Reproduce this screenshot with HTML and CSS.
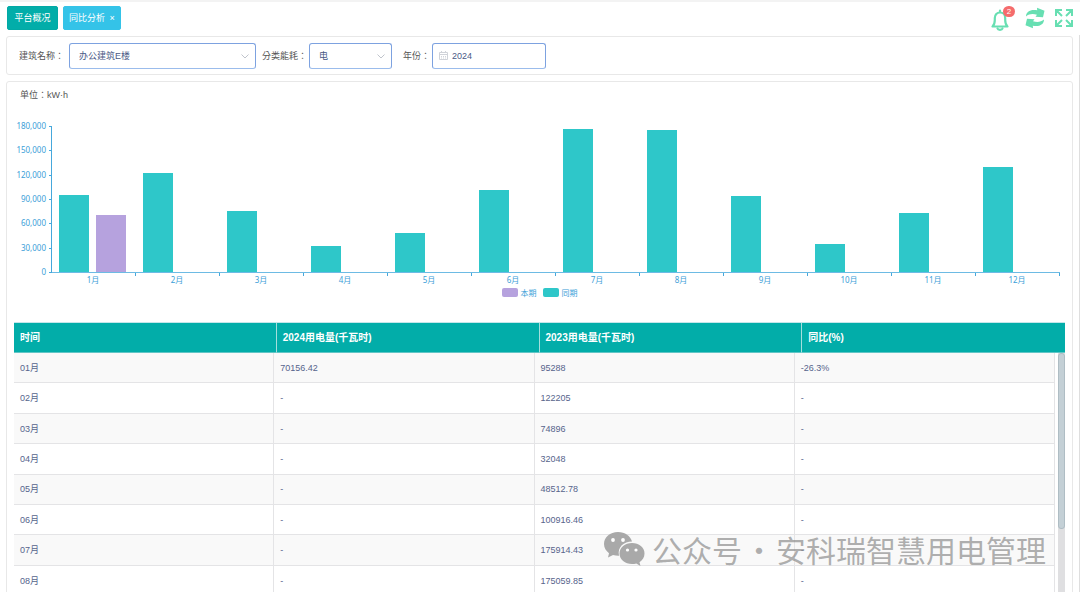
FILE: index.html
```
<!DOCTYPE html>
<html lang="zh-CN">
<head>
<meta charset="utf-8">
<title>同比分析</title>
<link rel="stylesheet" href="styles.css">
</head>
<body>
<header class="topbar">
  <nav class="tabs">
    <button class="tab" type="button">平台概况</button>
    <button class="tab tab-current" type="button">同比分析 <span class="tab-close">×</span></button>
  </nav>
  <div class="tools">
    <button class="tool" type="button" aria-label="消息">
      <svg width="18" height="22" viewBox="0 0 18 22" fill="none" stroke="currentColor" stroke-width="2.200" stroke-linejoin="round" stroke-linecap="round"><path d="M9 1.500v1.500M1.500 17.500h15c-1.700-1.500-2.300-3-2.300-6.500v-2C14.200 5.500 12 3.500 9 3.500S3.800 5.500 3.800 9v2c0 3.500-.6 5-2.300 6.500z"/><path d="M6.500 19.500c.5 1.700 4.500 1.700 5 0"/></svg>
      <span class="badge">2</span>
    </button>
    <button class="tool" type="button" aria-label="刷新">
      <svg width="20" height="22" viewBox="0 0 20 22" fill="currentColor"><path d="M1 9.500C1 4.500 5.500 2 12.200 3.200L12 .8 19.500 3.700 18 10.200 10.500 9.800 12 7.800C8 6.500 4 6.800 1 9.500z"/><path d="M19 12.500c0 5-4.500 7.500-11.200 6.300L8 21.200.5 18.300 2 11.800l7.500.4L8 14.200c4 1.300 8 1 11-1.700z"/></svg>
    </button>
    <button class="tool" type="button" aria-label="全屏">
      <svg width="18" height="18" viewBox="0 0 18 18" fill="none" stroke="currentColor" stroke-width="2"><path d="M1 7V1h6M11 1h6v6M17 11v6h-6M7 17H1v-6M1 1l6 6M17 1l-6 6M17 17l-6-6M1 17l6-6"/></svg>
    </button>
  </div>
</header>

<main class="page">
  <form class="card filters">
    <div class="field">
      <label class="label" for="building">建筑名称：</label>
      <span class="control control-wide">
        <select id="building" class="input"><option>办公建筑E楼</option></select>
        <svg class="chevron" width="8" height="5" viewBox="0 0 8 5" fill="none" stroke="currentColor"><path d="M.5.5 4 4 7.500.5"/></svg>
      </span>
    </div>
    <div class="field">
      <label class="label" for="energy">分类能耗：</label>
      <span class="control control-small">
        <select id="energy" class="input"><option>电</option></select>
        <svg class="chevron" width="8" height="5" viewBox="0 0 8 5" fill="none" stroke="currentColor"><path d="M.5.5 4 4 7.500.5"/></svg>
      </span>
    </div>
    <div class="field field-year">
      <label class="label" for="year">年份：</label>
      <span class="control control-date">
        <input id="year" class="input input-date" type="text" value="2024">
        <svg class="calendar" width="9" height="9" viewBox="0 0 9 9" fill="none" stroke="currentColor"><path d="M.5 1.500h8v7h-8zM.5 3.500h8M2.500 0v2M6.500 0v2M2 5.500h1M4 5.500h1M6 5.500h1M2 7h1M4 7h1M6 7h1"/></svg>
      </span>
    </div>
  </form>

  <section class="card report">
    <p class="unit label">单位：kW·h</p>
    <div class="chart">
      <div class="y-axis"><span>180,000</span><span>150,000</span><span>120,000</span><span>90,000</span><span>60,000</span><span>30,000</span><span>0</span></div>
      <div class="y-ticks"><i></i><i></i><i></i><i></i><i></i><i></i><i></i></div>
      <div class="plot" id="plot"></div>
    </div>
    <div class="legend">
      <span class="legend-item"><i class="swatch current"></i>本期</span>
      <span class="legend-item"><i class="swatch previous"></i>同期</span>
    </div>

    <div class="grid">
      <table class="table table-head">
        <thead><tr><th>时间</th><th>2024用电量(千瓦时)</th><th>2023用电量(千瓦时)</th><th>同比(%)</th></tr></thead>
      </table>
      <div class="grid-scroll">
        <table class="table table-body"><tbody id="rows"></tbody></table>
        <div class="track"><div class="thumb"></div></div>
      </div>
    </div>
  </section>
</main>
<div class="page-scroll"></div>

<div class="watermark">
  <svg width="42" height="36" viewBox="0 0 42 36"><path fill="#a9a9a9" d="M15 1C7 1 1 6.200 1 13c0 3.800 2 7 5 9.200L5 26.500l5-2.600c2 .6 4 .9 6 .8C14 16 21 10.500 29 10.500 27.500 5 22 1 15 1z"/><path fill="#a9a9a9" d="M29 12c-7 0-12.500 4.600-12.500 10.500S22 33 29 33c1.500 0 3-.2 4.300-.6L37.500 35l-1-3.800c3-2 5-5 5-8.700C41.500 16.600 36 12 29 12z"/><g fill="#fff"><circle cx="10" cy="9" r="1.900"/><circle cx="20" cy="9" r="1.900"/><circle cx="24.500" cy="19" r="1.600"/><circle cx="33" cy="19" r="1.600"/></g></svg>
  <span>公众号</span><span class="dot">·</span><span>安科瑞智慧用电管理</span>
</div>
<script src="app.js"></script>
</body>
</html>
```
FILE: styles.css
```
* { box-sizing: border-box; }
body {
  margin: 0;
  height: 100vh;
  overflow: hidden;
  display: flex;
  flex-direction: column;
  position: relative;
  border-top: 2px solid #f3f3f3;
  background: #fff;
  color: #555;
  font: 9px/12px "Liberation Sans", "Noto Sans CJK SC", sans-serif;
}
button, input, select { font: inherit; margin: 0; }

.topbar {
  display: flex;
  justify-content: space-between;
  align-items: flex-start;
  padding: 4px 7px 6px;
  flex: none;
}
.tabs { display: flex; gap: 5px; }
.tab {
  min-width: 51px;
  height: 24px;
  padding: 0 5px;
  border: 1px solid #02a9a5;
  border-radius: 2px;
  background: #02ada9;
  color: #fff;
}
.tab-current { background: #34c3e8; border-color: #34c3e8; }
.tab-close { margin-left: 2px; }
.tools { display: flex; align-items: center; gap: 14px; height: 24px; }
.tool {
  position: relative;
  display: flex;
  padding: 0;
  border: 0;
  background: none;
  color: #67dfb2;
}
.tool:first-child { padding-top: 4px; }
.tool:nth-child(2) { margin: 0 -4px 0 2px; }
.badge {
  position: absolute;
  top: 1px;
  right: -6px;
  width: 12px;
  height: 11px;
  border-radius: 6px;
  background: #f56c6c;
  color: #fff;
  font-size: 8px;
  line-height: 11px;
  text-align: center;
}

.page {
  flex: 1;
  min-height: 0;
  display: flex;
  flex-direction: column;
  gap: 6px;
  padding: 0 7px 0 6px;
}
.card { border: 1px solid #e8e8e8; border-radius: 3px; }
.filters { display: flex; align-items: center; gap: 6px; padding: 6px 12px; flex: none; height: 39px; }
.field { display: flex; align-items: center; gap: 2px; }
.field:first-child { gap: 5px; }
.field-year { margin-left: 5px; }
.label {
  font-family: "Liberation Sans", "Noto Sans CJK TC", sans-serif;
  -webkit-locale: "zh-TW";
  white-space: nowrap;
}
.control { position: relative; display: block; }
.control-wide { width: 187px; }
.control-small { width: 83px; }
.control-date { width: 114px; }
.input {
  display: block;
  width: 100%;
  height: 26px;
  padding: 0 9px;
  border: 1px solid #7da2e0;
  border-bottom-color: #9bbcec;
  border-radius: 3px;
  outline: 0;
  appearance: none;
  background: #fff;
  color: #4a5a86;
}
.input-date { padding-left: 19px; }
.chevron { position: absolute; right: 7px; top: 11px; color: #c0c4cc; }
.calendar { position: absolute; left: 7px; top: 8px; color: #d0d3d9; }

.report { flex: none; padding: 7px 7px 0; }
.unit { margin: 0 0 21px 6px; }
.chart { display: flex; height: 160px; padding-right: 5px; }
.y-axis {
  width: 32px;
  height: 154px;
  display: flex;
  flex-direction: column;
  justify-content: space-between;
  text-align: right;
}
.y-axis, .month-name, .legend {
  color: #3ba0d8;
  font: 8px/8px "Noto Sans", "Noto Sans CJK SC", sans-serif;
}
.y-ticks {
  width: 6px;
  height: 147px;
  margin: 4px 0 0;
  padding-left: 3px;
  display: flex;
  flex-direction: column;
  justify-content: space-between;
  border-right: 1px solid #46a8dc;
}
.y-ticks i { height: 1px; background: #46a8dc; }
.plot { flex: 1; display: flex; margin-top: 4px; }
.month { flex: 1; text-align: center; }
.bars {
  height: 147px;
  padding: 0 9% 0 8%;
  display: flex;
  align-items: flex-end;
  gap: 11%;
  border-bottom: 1px solid #6dbbe4;
}
.bar { width: 43%; }
.current { background: #b6a2de; }
.previous { background: #2ec7c9; }
.month-name {
  height: 12px;
  padding: 3px 2px 0 0;
  background: linear-gradient(#46a8dc, #46a8dc) right top / 1px 3px no-repeat;
}
.legend { display: flex; justify-content: center; gap: 6px; padding-top: 6px; }
.legend-item { display: flex; align-items: center; gap: 3px; }
.swatch { width: 16px; height: 9px; border-radius: 2px; }

.grid { margin-top: 25px; }
.table { width: 100%; table-layout: fixed; border-collapse: separate; border-spacing: 0; }
.table th, .table td { text-align: left; padding: 0 6px; }
.table-head { border-top: 1px solid #c4e6ea; }
.table-head th {
  height: 30px;
  background: #02ada9;
  border-right: 1px solid #a5dedd;
  border-bottom: 1px solid #62c5c6;
  color: #fff;
  font-size: 10px;
}
.table-head th:last-child { border-right: 0; }
.grid-scroll { display: flex; gap: 3px; }
.table-body { flex: 1; height: 365px; color: #56648c; }
.table-body td { border-right: 1px solid #e4e4e6; border-bottom: 1px solid #e4e4e6; }
.table-body tr:nth-child(odd) { background: #f9f9f9; }
.track { flex: none; width: 7px; background: #dfdfe1; }
.thumb { height: 176px; border: 1px solid #afbdc4; border-radius: 3px; background: #c4d0d6; }
.page-scroll { position: absolute; top: 33px; right: 0; bottom: 0; width: 1px; background: #dedede; }

.watermark {
  position: absolute;
  right: 34px;
  bottom: 25px;
  display: flex;
  align-items: center;
  color: rgba(140, 140, 140, .7);
  font: 30px/36px "Noto Sans CJK SC", sans-serif;
  white-space: nowrap;
  pointer-events: none;
}
.watermark svg { margin-right: 7px; }
.dot { width: 34px; text-align: center; }
```
FILE: app.js
```
const usage = [
  ["70156.42", "95288", "-26.3%"],
  ["-", "122205", "-"],
  ["-", "74896", "-"],
  ["-", "32048", "-"],
  ["-", "48512.78", "-"],
  ["-", "100916.46", "-"],
  ["-", "175914.43", "-"],
  ["-", "175059.85", "-"],
  ["-", "94000", "-"],
  ["-", "35000", "-"],
  ["-", "73000", "-"],
  ["-", "129500", "-"]
];
const axisMax = 180000;
const bar = (value, kind) =>
  isNaN(value) ? "" : `<div class="bar ${kind}" style="height:${value / axisMax * 100}%"></div>`;

document.getElementById("plot").innerHTML = usage.map(([now, before], i) =>
  `<div class="month"><div class="bars">${bar(before, "previous")}${bar(now, "current")}</div>
   <div class="month-name">${i + 1}月</div></div>`).join("");

document.getElementById("rows").innerHTML = usage.map((cells, i) =>
  `<tr><td>${String(i + 1).padStart(2, "0")}月</td>${cells.map(c => `<td>${c}</td>`).join("")}</tr>`).join("");
```
